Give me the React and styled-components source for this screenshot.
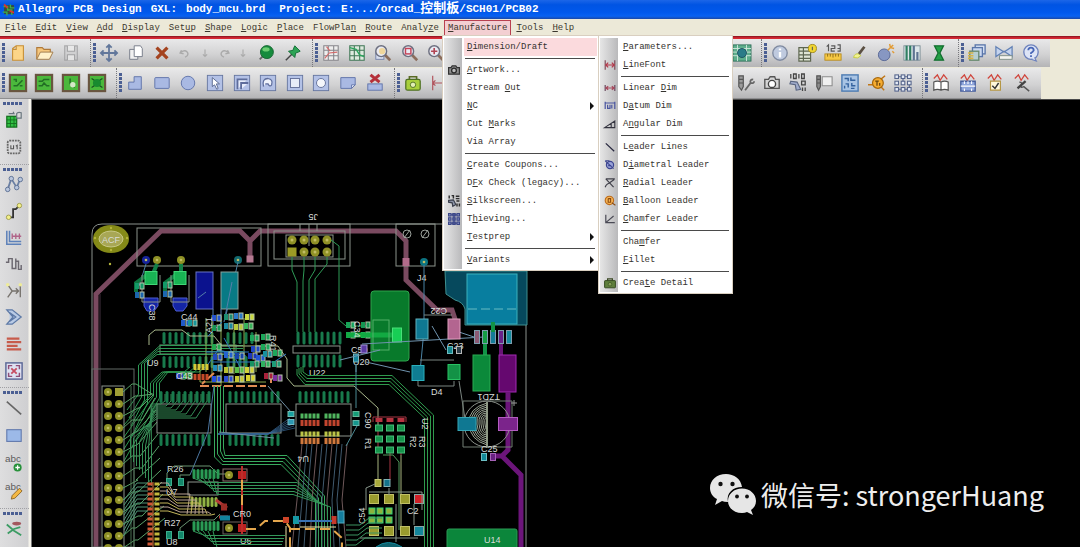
import React from "react";
import styled, { createGlobalStyle, css } from "styled-components";

const GlobalStyle = createGlobalStyle`
  * { box-sizing: border-box; }
  html, body { margin: 0; background: #000; }
  body { overflow: hidden; font-family: "Liberation Mono", "Noto Sans CJK SC", monospace; }
  button { font: inherit; color: inherit; background: none; border: 0; padding: 0; margin: 0; text-align: left; }
`;

const Window = styled.div`
  display: flex;
  flex-direction: column;
  min-height: 100vh;
  height: 100vh;
  background: #ece9d8;
`;

const TitleBar = styled.header`
  display: flex;
  align-items: center;
  height: 19px;
  padding-left: 2px;
  color: #fff;
  background: linear-gradient(#1c66e8, #0054e3 25%, #0058ec 65%, #0862f2 85%, #1a48a8);
`;

const Title = styled.h1`
  display: flex;
  gap: 8px;
  margin: 0 0 2px 2px;
  font-size: 11px;
  line-height: 14px;
  font-weight: bold;
  white-space: pre;
`;

const TitleGroup = styled.span`
  display: flex;
  gap: 9px;
  margin-left: ${(p) => (p.$far ? "6px" : "0")};
`;

const Han = styled.span`
  font-size: 13px;
`;

const MenuBar = styled.nav`
  display: flex;
  gap: 1px;
  height: 20px;
  padding: 1px 0 0 1px;
  font-size: 9px;
  line-height: 14px;
  color: #3b372e;
  border-style: solid;
  border-color: #b3182a;
  border-image: linear-gradient(#84111f 85%, #d82a33 95%) 3;
  border-width: 0 0 3px;
`;

const MenuHost = styled.div`
  position: relative;
`;

const MenuTitle = styled.button`
  height: 16px;
  padding: 0 4px;
  ${(p) =>
    p.$open &&
    css`
      background: #f3cfd2;
      outline: 1px solid #b8404f;
      outline-offset: -1px;
    `}
`;

const Mnemonic = styled.u`
  text-decoration-thickness: 1px;
  text-underline-offset: 1px;
`;

const Popup = styled.div`
  position: absolute;
  z-index: 5;
  top: ${(p) => (p.$sub ? "-1px" : "15px")};
  left: ${(p) => (p.$sub ? "155px" : "-2px")};
  width: ${(p) => (p.$sub ? "135px" : "157px")};
  padding: 2px 1px 1px;
  font-size: 9px;
  line-height: 18px;
  color: #35332f;
  background: #fff;
  border: 1px solid #d9cfc0;
`;

const PopupRow = styled.button`
  display: grid;
  grid-template-columns: 20px 1fr 10px;
  align-items: center;
  width: 100%;
  height: 18px;
  background: linear-gradient(90deg, #e6e6e6, #b9b9bb 18px, #fff 18px);
`;

const PopupLabel = styled.span`
  grid-column: 2 / span ${(p) => (p.$arrow ? 1 : 2)};
  padding-left: 3px;
  white-space: nowrap;
  background: ${(p) => (p.$active ? "#fbdadd" : "transparent")};
`;

const Glyph = styled.svg`
  display: block;
  width: ${(p) => p.$size}px;
  height: ${(p) => p.$size}px;
  margin: 0 auto;
  overflow: visible;
`;

const Rule = styled.div`
  height: 5px;
  padding: 2px 2px 2px 21px;
  background: linear-gradient(90deg, #e6e6e6, #b9b9bb 18px, #fff 18px);
  &::after {
    content: "";
    display: block;
    height: 1px;
    background: #4a4a4a;
  }
`;

const ToolRow = styled.div`
  display: flex;
  align-self: flex-start;
  height: ${(p) => (p.$tall ? "31px" : "28px")};
  margin-top: ${(p) => (p.$tall ? "1px" : "0")};
  background: linear-gradient(#e9e9ea, #d2d2d3 55%, #b4b4b6);
  border-bottom: ${(p) => (p.$tall ? "1px solid #8e8e90" : "0")};
`;

const ToolGroup = styled.div`
  display: flex;
  align-items: center;
  width: ${(p) => p.$w}px;
  padding: 0 6px 0 2px;
  border-right: 1px dotted #77777c;
  &:last-child { border-right: 0; }
`;

const Grip = styled.i`
  flex: none;
  width: ${(p) => (p.$flat ? "20px" : "3px")};
  height: ${(p) => (p.$flat ? "3px" : "20px")};
  background: repeating-linear-gradient(${(p) => (p.$flat ? "90deg" : "180deg")}, #4b5f93 0 3px, transparent 3px 4px);
`;

const ToolButton = styled.button`
  flex: ${(p) => (p.$narrow ? 19 : 26)} 1 0;
  min-width: 0;
  min-height: 0;
`;

const ToolSpace = styled.span`
  flex: 278 1 0;
`;

const Body = styled.main`
  display: flex;
  flex: 1;
  min-height: 0;
`;

const SideBar = styled.aside`
  flex: none;
  width: 32px;
  padding-right: 3px;
  overflow: hidden;
  background: linear-gradient(90deg, #dededf, #cfcfd1 28px, #f4f2ea 29px, #f4f2ea 31px, #777 31px);
`;

const SideGroup = styled.div`
  display: flex;
  flex-direction: column;
  height: ${(p) => p.$h}px;
  padding: 3px 2px 3px 3px;
  border-bottom: 1px dotted #a0a0a4;
  & > button { width: 21px; }
`;

const Canvas = styled.section`
  position: relative;
  flex: 1;
  overflow: hidden;
  background: #000;
  border-top: 1px solid #4a4a4a;
`;

const Board = styled.svg`
  display: block;
  width: 1048px;
  height: 447px;
`;

const Watermark = styled.p`
  position: absolute;
  right: 36px;
  bottom: 31px;
  display: flex;
  align-items: center;
  gap: 4px;
  margin: 0;
  color: #eee;
  font: 27px/40px "Noto Sans CJK SC", sans-serif;
  white-space: nowrap;
`;

const WechatLogo = styled.svg`
  width: 47px;
  height: 42px;
`;

/* ---------- icons, all drawn on a 20 x 20 grid ---------- */

const blue = { fill: "#a9b9e3", stroke: "#5c70a8", strokeWidth: 1 };
const line = (d, stroke = "#555b66", w = 1.3, fill = "none") => (
  <path d={d} fill={fill} stroke={stroke} strokeWidth={w} />
);
const plate = (extra, fill = "#b3c1e6") => (
  <>
    <rect x="1.5" y="1.5" width="17" height="17" fill={fill} stroke="#64759f" />
    {extra}
  </>
);
const chip = (extra) => (
  <>
    <rect x="1" y="1" width="18" height="18" fill="#4bb83c" stroke="#695540" strokeWidth="2.4" />
    {extra}
  </>
);
const lens = (extra) => (
  <>
    {line("M12 12L18 18", "#8b6d5c", 3)}
    <circle cx="8" cy="8" r="6" fill="#e9eaf2" stroke="#6d7080" strokeWidth="1.6" />
    {extra}
  </>
);
const wave = line("M2 5L6 1L9 7L13 1L17 6", "#d0453c", 1.4);

const ICONS = {
  app: (
    <>
      <rect x="3" y="3" width="14" height="13" fill="#3a4a3a" />
      {line("M2 5H8V10H14V17M1 13H7V18M12 2V7H18", "#3cb04b", 2)}
      {line("M3 2L8 7M11 11L17 14", "#d33", 2.5)}
    </>
  ),
  new: line("M4 5L8 2H16V18H4ZM4 6H8V2", "#c78f36", 1.2, "#fcd588"),
  open: (
    <>
      {line("M2 17V4H8L10 6H17V9", "#b07a3a", 1.3, "#f6c77c")}
      {line("M2 17L6 9H20L16 17Z", "#a37d50", 1.1, "#fff0c8")}
    </>
  ),
  save: (
    <g opacity=".75">
      {line("M3 2H17V18H3Z", "#9a9a9c", 1.3, "#cfcfd0")}
      {line("M6 2V8H14V2M6 18V12H14V18", "#929294", 1.2, "#ededed")}
    </g>
  ),
  move: line("M10 2V18M2 10H18M7 4L10 1L13 4M7 16L10 19L13 16M4 7L1 10L4 13M16 7L19 10L16 13", "#62779b", 2),
  copy: (
    <>
      {line("M3 6H12V17H3Z", "#7a7f8c", 1.1, "#f1f1f1")}
      {line("M8 2H15L17 5V14H8Z", "#7a7f8c", 1.1, "#fff")}
    </>
  ),
  del: line("M4 4L16 16M16 4L4 16", "#a4431f", 3.6),
  undo: line("M5 6L3 10L8 11M4 9Q11 4 14 10Q15 14 10 16", "#aaa", 2),
  down: line("M10 5V14M7 12L10 15L13 12", "#aaa", 1.6),
  redo: line("M15 6L17 10L12 11M16 9Q9 4 6 10Q5 14 10 16", "#aaa", 2),
  ball: (
    <>
      {line("M3 17L8 12", "#666", 2)}
      <circle cx="11" cy="9" r="7.2" fill="#168b3d" stroke="#156330" />
      <ellipse cx="10" cy="6" rx="4" ry="2.4" fill="#6ccc72" />
    </>
  ),
  pin: (
    <>
      {line("M2 18L9 11", "#444", 1.6)}
      {line("M12 2L18 8L16 9L13 10L12 15L5 8L10 7L11 4Z", "#126c34", 1, "#2da455")}
    </>
  ),
  gridRed: (
    <>
      {line("M2 2H18V18H2ZM7 2V18M13 2V18M2 7H18M2 13H18", "#86858a", 1.2, "#eee")}
      {line("M3 16L8 10L17 9M5 3L9 8", "#d46a6a", 1.3)}
    </>
  ),
  gridGreen: (
    <>
      {line("M2 2H18V18H2ZM7 2V18M13 2V18M2 7H18M2 13H18", "#3f7655", 1.2, "#dfeadf")}
      {line("M2 4L9 6L13 12L18 14", "#2ca35d", 1.6)}
    </>
  ),
  zoomArea: (
    <>
      <rect x="2" y="8" width="9" height="9" fill="#d7deef" stroke="#7380a8" />
      {lens(<circle cx="9" cy="8" r="3.5" fill="#f0d79c" />)}
    </>
  ),
  zoomFit: lens(<rect x="5" y="5" width="6" height="6" fill="none" stroke="#c54458" strokeWidth="1.6" />),
  zoomIn: lens(line("M8 4.5V11.5M4.5 8H11.5", "#b14554", 1.8)),
  layers: (
    <>
      <rect x="0" y="1" width="20" height="18" fill="#5fae8c" stroke="#2d6e58" />
      {line("M0 5H20M0 9H20M0 13H20M5 1V19M15 1V19", "#d0e8dc", 1)}
      <circle cx="10" cy="10" r="5" fill="#2a7b88" stroke="#18505b" />
    </>
  ),
  info: (
    <>
      <circle cx="10" cy="10" r="8" fill="#bfcadf" stroke="#7f8aa0" strokeWidth="1.5" />
      {line("M10 9V15M10 5V7", "#fff", 2.6)}
    </>
  ),
  report: (
    <>
      {line("M1 4H14V19H1ZM1 8H14M1 12H14M1 16H14M6 4V19", "#5d6650", 1.3, "#dfe5d4")}
      <circle cx="16" cy="5" r="4.5" fill="#f2d631" stroke="#9c8615" />
      {line("M16 3V7", "#665", 1.3)}
    </>
  ),
  measure: (
    <>
      {line("M3 3L5 1V8M8 2H12V5H8V8H12M15 1H18V8H15M15 5H18", "#585858", 1.3)}
      <rect x="1" y="11" width="18" height="7" fill="#f6c944" stroke="#b78a1e" />
      {line("M4 11V14M7 11V14M10 11V15M13 11V14M16 11V14", "#8a6718", 1)}
    </>
  ),
  brush: (
    <>
      {line("M4 15Q5 10 10 11L12 13Q9 17 4 15Z", "#c2c93d", 1, "#f2f291")}
      {line("M10 11L16 3", "#5a4f42", 3)}
    </>
  ),
  bomb: (
    <>
      <circle cx="8" cy="12" r="6.5" fill="#8797c2" stroke="#566594" />
      {line("M12 7L15 4M15 4L18 1M15 4L19 5M15 4L14 0M17 8L19 10", "#e29b34", 1.6)}
    </>
  ),
  bars: (
    <>
      <rect x="1" y="2" width="18" height="16" fill="#dde6ea" stroke="#7c8e96" />
      {line("M4 2V18M8 2V18", "#2f7e62", 2.4)}
      {line("M12 2V18M16 9V18", "#5e7391", 2.4)}
    </>
  ),
  hourglass: line("M5 2H15L11 10L15 18H5L9 10Z", "#126d2f", 1.4, "#25a046"),
  windows: (
    <>
      <rect x="8" y="1" width="11" height="10" fill="#dce5f5" stroke="#5a76aa" strokeWidth="1.5" />
      <rect x="5" y="4" width="11" height="10" fill="#cbd9f1" stroke="#5a76aa" strokeWidth="1.5" />
      <rect x="2" y="8" width="10" height="10" fill="#b7cfd2" stroke="#688a6e" strokeWidth="1.5" />
      {line("M0 10H6M0 13H6M0 16H6", "#d8b447", 1.8)}
    </>
  ),
  bowtie: (
    <>
      {line("M1 3L10 9L19 3V14L10 8L1 14Z", "#6281b5", 1.4, "#c5d4ee")}
      <rect x="5" y="13" width="14" height="4" fill="#f5f5f0" stroke="#7b8c84" />
    </>
  ),
  help: (
    <>
      <circle cx="10" cy="9" r="8" fill="#dde4f6" stroke="#6d82bd" strokeWidth="1.5" />
      {line("M14 15L16 19L10 17", "#6d82bd", 1.2, "#dde4f6")}
      {line("M7 7Q7 4 10 4Q13 4 13 7Q12 9 10 10V11M10 12.5V14.5", "#4967b7", 2)}
    </>
  ),
  chipA: chip(line("M5 13H9L15 7M5 6H8V9M12 13H15", "#226e25", 1.7)),
  chipB: chip(line("M4 8H8L10 6H16M4 13H8L10 10L13 13H16", "#226e25", 1.7)),
  chipC: chip(
    <>
      <path d="M9 5V11M9 11L14 15" stroke="#226e25" strokeWidth="1.7" />
      <circle cx="12" cy="12" r="3" fill="#d5e8c8" />
    </>
  ),
  chipD: chip(
    <>
      <circle cx="10" cy="10" r="4.5" fill="#188b2f" />
      {line("M4 5L7 7M16 5L13 7M4 15L7 13M16 15L13 13", "#174f20", 1.2)}
    </>
  ),
  lshape: <path d="M3 9H9V3H17V17H3Z" {...blue} />,
  rect: <rect x="2" y="4" width="16" height="12" rx="1" {...blue} />,
  circle: <circle cx="10" cy="10" r="7.5" {...blue} />,
  select: plate(line("M7 4V14L9.5 12L12 17L13.5 16L11.5 11H15Z", "#55648d", 1, "#fff")),
  step: plate(line("M5 17V6H16M9 17V10H17", "#5e6d9c", 2, "#e6ecfa")),
  arc: plate(line("M5 14Q3 5 10 5Q16 6 14 12Q12 15 10 11H7", "#5e6d9c", 1.4, "#eef2fb")),
  square: plate(<rect x="5" y="5" width="10" height="10" fill="#e7ecf8" stroke="#5f6d96" />),
  round: plate(<circle cx="10" cy="10" r="5" fill="#f4f6fb" stroke="#5f6d96" />),
  cut: (
    <>
      <path d="M2 4H18V12L14 16H2Z" {...blue} />
      <path d="M18 12L14 16V12Z" fill="#f0f2fa" stroke="#5c70a8" />
    </>
  ),
  island: (
    <>
      {line("M5 1L15 9M15 1L5 9", "#b5303a", 3.4)}
      <rect x="2" y="11" width="16" height="7" fill="#a9b9e3" stroke="#5c70a8" />
    </>
  ),
  bag: (
    <>
      {line("M6 7V3H14V7", "#5a6b24", 1.8)}
      <rect x="2" y="6" width="16" height="12" rx="2" fill="#a8cf3c" stroke="#4f7024" strokeWidth="1.4" />
      <circle cx="10" cy="12" r="3" fill="#e2efb5" stroke="#4f7024" />
    </>
  ),
  detail: (
    <>
      {line("M6 7V3H14V7", "#3c4a24", 2)}
      <rect x="1" y="6" width="18" height="12" rx="1" fill="#5f7f3c" stroke="#34491f" strokeWidth="1.6" />
      <circle cx="10" cy="12" r="3" fill="#86a158" stroke="#34491f" />
    </>
  ),
  dim: line("M3 2V18M17 2V18M3 10H17M6 7L3 10L6 13M14 7L17 10L14 13", "#b1545d", 1.3),
  font: (
    <>
      {line("M2 2V18M18 2V18", "#7a4050", 1.8)}
      {line("M3 10H17M7 6L3 10L7 14M13 6L17 10L13 14", "#b5384a", 2)}
    </>
  ),
  linear: (
    <>
      {line("M2 5V15M18 5V15", "#6b4a60", 2)}
      {line("M3 10H17M7 7L3 10L7 13M13 7L17 10L13 13", "#a8485c", 2)}
    </>
  ),
  drill: (
    <>
      {line("M2 2H7V14L5 18L2 14ZM2 6H7M2 10H7", "#555", 1.3, "#9b9b9b")}
      {line("M9 18L15 10Q14 6 18 6M15 10Q19 11 19 8", "#666", 2)}
    </>
  ),
  camera: (
    <>
      {line("M2 6H6L8 3H13L14 6H18V16H2Z", "#555", 1.5, "#d5d5d5")}
      <circle cx="10" cy="11" r="4" fill="#fff" stroke="#444" strokeWidth="1.5" />
    </>
  ),
  artwork: (
    <>
      {line("M1 6H5L7 3H13L15 6H19V17H1Z", "#333", 2, "#8d8d8d")}
      <circle cx="10" cy="11" r="4" fill="#bbb" stroke="#2c2c2c" strokeWidth="2.2" />
    </>
  ),
  silk: (
    <>
      {line("M2 1V6M6 1H9V6M13 2H19M13 6H19M14 10H19M15 14V19M19 14V19", "#2e2e2e", 2.4)}
      {line("M1 9L9 8L13 16L8 19L7 13L1 12Z", "#3a3f4c", 2, "#8d95a8")}
    </>
  ),
  thieving: (
    <g fill="#9aa3cf" stroke="#3b4788" strokeWidth="2">
      {[1, 8, 15].map((y) => [1, 8, 15].map((x) => <rect key={x + "-" + y} x={x} y={y} width="4" height="4" />))}
      <path d="M5 3H15M5 17H15M10 3V17" />
    </g>
  ),
  drillData: (
    <>
      {line("M2 0V5M5 0H8V5H5ZM11 0V5M14 0H17V5H14ZM14 8H18V12H14ZM15 15V19M18 15V19", "#444", 1.4)}
      {line("M2 8L9 9L13 17L8 18L7 12L1 11Z", "#596580", 1.2, "#9eaaca")}
    </>
  ),
  drillSheet: (
    <>
      {line("M2 2H6V14L4 18L2 14ZM2 6H6M2 10H6", "#555", 1.3, "#8d8d8d")}
      {line("M8 3H19V13H8Z", "#8c8c8c", 1.2, "#f0f0f0")}
    </>
  ),
  bga: (
    <>
      <rect x="1" y="1" width="18" height="18" fill="#a9c4e4" stroke="#4f7db3" strokeWidth="1.6" />
      {line("M4 5H8V8M11 4V7H16M5 11H8V15M12 10V13H16M11 16H15M4 16V13", "#35639f", 1.6)}
    </>
  ),
  test: (
    <>
      {line("M0 12H6M14 6L19 2M14 14L18 18", "#c17617", 1.6)}
      <circle cx="11" cy="10" r="6" fill="#f6ac30" stroke="#a7690f" strokeWidth="1.4" />
      {line("M8 8H12M10 8V13M13 10V13", "#6b470f", 1.4)}
    </>
  ),
  blocks: (
    <g fill="#e5ebf6" stroke="#56658c" strokeWidth="1.2">
      {[1, 8, 15].map((y) => [1, 8, 15].map((x) => <rect key={x + "-" + y} x={x} y={y} width="4" height="4" />))}
      <path d="M5 3H8M12 3H15M5 17H8M12 17H15M10 5V8M17 12V15" />
    </g>
  ),
  book: (
    <>
      {wave}
      {line("M2 9Q6 7 10 9Q14 7 18 9V18Q14 16 10 18Q6 16 2 18ZM10 9V18", "#555", 1.3, "#fff")}
    </>
  ),
  film: (
    <>
      {wave}
      {line("M2 8H18V19H2Z", "#475f9d", 1.5, "#8ea5db")}
      {line("M2 13.5H18M6 8V11M10 8V11M14 8V11M6 16V19M14 16V19", "#fff", 1.2)}
    </>
  ),
  check: (
    <>
      {wave}
      {line("M5 8H16V18H5Z", "#b49543", 1.3, "#fff8da")}
      {line("M7 13L10 16L14 10", "#333", 1.6)}
    </>
  ),
  probe: (
    <>
      {wave}
      {line("M7 9Q11 9 9 13Q8 16 12 14L18 19", "#555", 1.6)}
      {line("M5 16L14 8", "#444", 2.6)}
    </>
  ),
  placeChip: (
    <>
      <rect x="2" y="7" width="11" height="12" fill="#31c043" stroke="#14701f" strokeWidth="1.4" />
      {line("M2 11H13M6 7V19M10 7V19M2 15H13", "#14701f", 1)}
      {line("M4 4H10L9 2M13 4Q14 2 18 3V9H13Z", "#68757d", 1.3, "#d8d8d8")}
    </>
  ),
  part: (
    <>
      <rect x="3" y="3" width="14" height="14" rx="2" fill="none" stroke="#666" strokeWidth="2" strokeDasharray="2 1" />
      {line("M6.5 8V12H9.500V8M12 9L13.500 8V12.500", "#555", 1.2)}
    </>
  ),
  route: (
    <>
      {line("M3 16L7 4L13 14L17 4", "#6a7fa3", 2)}
      <g fill="#b9c6dd" stroke="#596d91">
        <circle cx="3" cy="16" r="2.5" /><circle cx="7" cy="4" r="2.5" />
        <circle cx="13" cy="14" r="2.5" /><circle cx="17" cy="5" r="2.5" />
      </g>
    </>
  ),
  slide: (
    <>
      {line("M4 17H9V8H12L16 4", "#333", 2)}
      <g fill="#f2ef8a" stroke="#9d9a4b"><circle cx="4" cy="17" r="2.5" /><circle cx="16" cy="4" r="2.5" /></g>
    </>
  ),
  bus: (
    <>
      {line("M2 2V17H18M5 2V14H18", "#5e82ba", 1.7)}
      {line("M8 5V11M12 5V11M16 5V11M8 8H18", "#b06488", 1.5)}
    </>
  ),
  delay: line("M1 8H4V4H8V15H12V4M12 7H15V16H18V11", "#6c6870", 1.6),
  vertex: (
    <>
      {line("M3 3L8 10L3 17M8 10H14M12 7L15 10L12 13M17 3V17", "#77736d", 1.5)}
      <g fill="#efec99"><circle cx="3" cy="3" r="2" /><circle cx="17" cy="3" r="2" /></g>
    </>
  ),
  chevrons: line("M2 2H8L18 10L8 18H2L9 10ZM5 5L12 10L5 15", "#5d79a6", 1.4, "#b9cbe6"),
  lines: line("M2 4H16M2 8H18M2 12H14M2 16H18", "#c75b4b", 2.6),
  fan: (
    <>
      <rect x="1" y="1" width="18" height="18" fill="#dfe2f2" stroke="#596695" strokeWidth="1.6" />
      {line("M7 7L13 13M13 7L7 13", "#c74d62", 2)}
      {line("M4 8V4H8M12 4H16V8M16 12V16H12M8 16H4V12", "#8f4f78", 1.6)}
    </>
  ),
  diag: line("M2 3L18 17", "#666", 1.8),
  panel: <rect x="2" y="3" width="16" height="13" fill="#9cb9e8" stroke="#6078ac" strokeWidth="1.2" />,
  textAdd: (
    <>
      <text x="0" y="9" fontSize="11" fontFamily="Liberation Sans, sans-serif" fill="#5a5a5a">abc</text>
      <circle cx="14" cy="15" r="4.5" fill="#27913a" />
      {line("M14 12.5V17.5M11.5 15H16.5", "#fff", 1.4)}
    </>
  ),
  textEdit: (
    <>
      <text x="0" y="9" fontSize="11" fontFamily="Liberation Sans, sans-serif" fill="#5a5a5a">abc</text>
      {line("M7 19L8 15L16 7L19 10L11 18Z", "#8a6428", 1, "#f4b844")}
    </>
  ),
  net: (
    <>
      {line("M2 5L10 12L18 17M3 15L10 10L17 8", "#3c9c64", 2)}
      <ellipse cx="13" cy="4" rx="5" ry="2" fill="#a3575d" />
    </>
  ),
  datum: line("M2 3V15M18 3V15M2 5H18M6 8V14H10V8M13 8V14", "#4a56a0", 2),
  angular: line("M1 16H18V5Z M12 9V16", "#33333f", 1.8),
  leader: line("M3 4L17 17", "#24243c", 2),
  diametral: (
    <>
      <circle cx="10" cy="10" r="6" fill="#9aa3d8" stroke="#3c4590" strokeWidth="2" />
      {line("M2 3L16 16M2 3H9M7 11H12", "#3c4590", 1.8)}
    </>
  ),
  radial: line("M3 3H18M3 3L16 17M10 10Q4 11 2 17M10 9L17 4", "#40404a", 2),
  balloon: (
    <>
      <circle cx="9" cy="9" r="7" fill="#f5b456" stroke="#bd6a18" strokeWidth="1.8" />
      {line("M7 6H11V12H7V6M13 13L19 17", "#8a4a10", 1.8)}
    </>
  ),
  corner: line("M3 3V16H18M3 16L16 5", "#4a4a55", 2),
};

const Icon = ({ name, size = 18 }) => (
  <Glyph viewBox="0 0 20 20" $size={size} aria-hidden="true">
    {ICONS[name]}
  </Glyph>
);

/* "&" marks the access key of a label */
const Label = ({ text }) => {
  const at = text.indexOf("&");
  if (at < 0) return text;
  return (
    <>
      {text.slice(0, at)}
      <Mnemonic>{text[at + 1]}</Mnemonic>
      {text.slice(at + 2)}
    </>
  );
};

const MENUS = ["&File", "&Edit", "&View", "&Add", "&Display", "Set&up", "&Shape", "&Logic", "&Place", "FlowPla&n", "&Route", "Analy&ze", "&Manufacture", "&Tools", "&Help"];

const MANUFACTURE = [
  { text: "&Dimension/Draft", active: true }, null,
  { text: "&Artwork...", icon: "artwork" },
  { text: "Stream &Out" },
  { text: "&NC", arrow: true },
  { text: "Cut &Marks" },
  { text: "Via Array" }, null,
  { text: "&Create Coupons..." },
  { text: "D&Fx Check (legacy)..." },
  { text: "&Silkscreen...", icon: "silk" },
  { text: "T&hieving...", icon: "thieving" },
  { text: "&Testprep", arrow: true }, null,
  { text: "&Variants", arrow: true },
];

const DIMENSION = [
  { text: "&Parameters..." },
  { text: "&LineFont", icon: "font" }, null,
  { text: "Linear &Dim", icon: "linear" },
  { text: "D&atum Dim", icon: "datum" },
  { text: "A&ngular Dim", icon: "angular" }, null,
  { text: "L&eader Lines", icon: "leader" },
  { text: "D&iametral Leader", icon: "diametral" },
  { text: "&Radial Leader", icon: "radial" },
  { text: "&Balloon Leader", icon: "balloon" },
  { text: "&Chamfer Leader", icon: "corner" }, null,
  { text: "Cha&mfer" },
  { text: "&Fillet" }, null,
  { text: "Crea&te Detail", icon: "detail" },
];

const Menu = ({ items, sub, children }) => (
  <Popup $sub={sub} role="menu">
    {items.map((item, i) =>
      item ? (
        <PopupRow key={i} role="menuitem">
          <span>{item.icon && <Icon name={item.icon} size={12} />}</span>
          <PopupLabel $active={item.active} $arrow={item.arrow}>
            <Label text={item.text} />
          </PopupLabel>
          {item.arrow && (
            <Glyph viewBox="0 0 8 8" $size={8}><path d="M2 0L6 4L2 8Z" fill="#111" /></Glyph>
          )}
        </PopupRow>
      ) : (
        <Rule key={i} />
      )
    )}
    {children}
  </Popup>
);

const ROW_ONE = [
  { w: 91, tools: ["new", "open", "save"] },
  { w: 222, tools: ["move", "copy", "del", "-undo", "-down", "-redo", "-down", "ball", "pin"] },
  { w: 449, tools: ["gridRed", "gridGreen", "zoomArea", "zoomFit", "zoomIn", null, "layers"] },
  { w: 197, tools: ["info", "report", "measure", "brush", "bomb", "bars", "hourglass"] },
  { w: 91, tools: ["windows", "bowtie", "help"] },
];
const ROW_TWO = [
  { w: 117, tools: ["chipA", "chipB", "chipC", "chipD"] },
  { w: 278, tools: ["lshape", "rect", "circle", "select", "step", "arc", "square", "round", "cut", "island"] },
  { w: 528, tools: ["bag", "dim", null, "drill", "camera", "drillData", "drillSheet", "bga", "test", "blocks"] },
  { w: 118, tools: ["book", "film", "check", "probe"] },
];
const SIDE = [
  { h: 66, tools: ["placeChip", "part"] },
  { h: 223, tools: ["route", "slide", "bus", "delay", "vertex", "chevrons", "lines", "fan"] },
  { h: 121, tools: ["diag", "panel", "textAdd", "textEdit"] },
  { h: 66, tools: ["net", "vertex"] },
];

const Tool = ({ name }) => {
  if (!name) return <ToolSpace />;
  const narrow = name[0] === "-";
  const icon = narrow ? name.slice(1) : name;
  return (
    <ToolButton $narrow={narrow} aria-label={icon}>
      <Icon name={icon} size={narrow ? 14 : 18} />
    </ToolButton>
  );
};

const ToolBar = ({ groups, tall }) => (
  <ToolRow $tall={tall}>
    {groups.map((g, i) => (
      <ToolGroup key={i} $w={g.w}>
        <Grip />
        {g.tools.map((t, j) => <Tool key={j} name={t} />)}
      </ToolGroup>
    ))}
  </ToolRow>
);

/* ---------- circuit board ---------- */

const range = (n) => Array.from({ length: n }, (_, i) => i);

const Path = ({ d, c = "#2f9b57", w = 1, o = 1, f = "none", dash }) => (
  <path d={d} stroke={c} strokeWidth={w} opacity={o} fill={f} strokeDasharray={dash} />
);
const Pad = ({ x, y, w = 6, h = 6, c = "#19a04e", s = "none" }) => (
  <rect x={x - w / 2} y={y - h / 2} width={w} height={h} fill={c} stroke={s} strokeWidth="1" />
);
const Box = ({ x, y, x2, y2, c = "#8c948c", f = "none", r = 0 }) => (
  <rect x={x} y={y} width={x2 - x} height={y2 - y} stroke={c} fill={f} rx={r} />
);
const Via = ({ x, y, r = 4.5, c = "#8f9126" }) => (
  <>
    <circle cx={x} cy={y} r={r} fill={c} />
    <circle cx={x} cy={y} r={r / 3} fill="#c1bd64" />
  </>
);
const Pins = ({ x, y, n, step = 6, h = 12, w = 3, c = "#187a4c" }) =>
  range(n).map((i) => <rect key={i} x={x + i * step - w / 2} y={y - h / 2} width={w} height={h} rx="1.5" fill={c} />);
const Ref = ({ x, y, t, a = 0, s = 9 }) => (
  <text x={x} y={y} fontSize={s} fill="#d8dcd8" fontFamily="Liberation Sans, sans-serif" transform={`rotate(${a} ${x} ${y})`}>
    {t}
  </text>
);

const SMALL_PARTS = [
  [139, 286, "#139a68"], [139, 295, "#1c66ad"], [167, 285, "#139a68"], [167, 294, "#1c66ad"],
  [185, 323, "#2059c8"], [192, 323, "#16949a"], [216, 318, "#2456d0"], [228, 317, "#1b8c70"], [238, 316, "#2b77c6"],
  [249, 317, "#c8d840"], [216, 328, "#189658"], [228, 326, "#1d88a0"], [238, 327, "#b9ca3c"], [248, 326, "#38b25a"],
  [254, 338, "#1da65a"], [265, 337, "#1da65a"], [265, 347, "#1ca75a"], [255, 349, "#2147c4"], [277, 353, "#1da65a"],
  [216, 347, "#23a750"], [217, 357, "#2048bc"], [228, 355, "#2462cf"], [239, 356, "#1644ab"], [252, 356, "#1c35b8"],
  [260, 358, "#2355d0"], [267, 354, "#1790a0"], [254, 364, "#179262"], [265, 364, "#30b060"], [276, 364, "#1e9c78"],
  [180, 376, "#2340bd"], [187, 376, "#249c40"], [217, 368, "#218cba"], [228, 370, "#b9bf31"], [239, 370, "#59bd48"],
  [249, 370, "#d1d23b"], [216, 379, "#264fe0"], [228, 379, "#2c4bd0"], [239, 379, "#c7c935"], [250, 378, "#d9d32d"],
  [268, 376, "#a8213a"], [277, 378, "#7a2f9e"], [350, 325, "#18a558"], [365, 325, "#159552"], [350, 335, "#18a558"], [365, 335, "#1cc060"],
];

const CircuitBoard = () => (
  <Board viewBox="32 100 1048 447" role="img" aria-label="body_mcu.brd board layout">
    <Path d="M92 547V234Q92 224 102 224H526V547" c="#8b928d" />
    <Path d="M96 547V294L161 231H240L250 241L260 231H396L406 241V280L437 310H452L456 322M250 241V260" c="#7a4a60" w={5} />
    <Path d="M100 547V294" c="#43303f" w={1} />

    <ellipse cx="111" cy="239" rx="18" ry="14" fill="#858a18" />
    <ellipse cx="111" cy="239" rx="12" ry="8" fill="#a8a755" stroke="#c9c987" />
    <Ref x={102} y={243} t="ACF" />
    {[[95, 238], [127, 238], [111, 228], [111, 250], [110, 264]].map(([x, y]) => <circle key={x + "-" + y} cx={x} cy={y} r="1.2" fill="#b5b53c" />)}

    <Box x={137} y={228} x2={261} y2={266} />
    <Box x={268} y={224} x2={350} y2={266} />
    <Box x={274} y={231} x2={345} y2={259} />
    <Box x={286} y={235} x2={333} y2={257} />
    <Box x={396} y={224} x2={435} y2={266} />
    <Path d="M300 224V231M309 224V246M317 224V231" c="#8c948c" />
    {[292, 304, 315, 327].map((x, i) => (
      <g key={x}>
        <Via x={x} y={240} />
        {i ? <Via x={x} y={252} /> : <Pad x={x} y={252} w={9} h={9} c="#9b9b25" />}
        <Path d={`M${x} 257V${270 - (i === 3 ? 6 : 0)}L${297 + i * 6} ${282 - i}V332`} />
      </g>
    ))}
    <Path d="M331 240L339 246V320L346 326H369" />
    {[407, 425].map((x) => (
      <g key={x}>
        <circle cx={x} cy="234" r="4" fill="none" stroke="#9aa09a" />
        <Path d={`M${x - 3} 238L${x + 3} 230`} c="#9aa09a" />
      </g>
    ))}
    <Ref x={318} y={214} t="J5" a={180} />
    <Ref x={417} y={281} t="J4" s={9} />

    <Via x={146} y={260} r={4} c="#16249b" />
    <Via x={157} y={260} r={4} />
    <Via x={181} y={260} r={4} />
    <Via x={238} y={260} r={4} c="#12686e" />
    <Pad x={250} y={259} w={7} h={7} c="#b57991" />
    <Via x={424} y={262} r={4} c="#0c7381" />
    <Pad x={406} y={262} w={7} h={8} c="#b36b8b" />
    <Path d="M157 264L152 276M181 264V276" c="#128047" w={4} />
    <Path d="M146 264L139 286M238 262L226 315M424 265V330L420 372" c="#4b83a4" />
    {[151, 180].map((x) => (
      <g key={x}>
        <Path d={`M${x - 3} 274L${x - 15} 283V292`} c="#0d743e" w={4} />
        <Pad x={x} y={278} w={12} h={13} c="#19b354" s="#43d778" />
        <Path d={`M${x - 7} 298H${x + 7}V306L${x + 3} 311H${x - 4}L${x - 7} 306Z`} c="#4e5fd0" f="#1425a5" />
        <Path d={`M${x + 9} 275V302H${x - 9}V275`} c="#889188" />
      </g>
    ))}
    <Ref x={149} y={304} t="C38" a={90} s={9} />
    <Ref x={196} y={272} x2={213} t="" />
    <Box x={196} y={272} x2={213} y2={309} c="#6974c3" f="#0b128e" />
    <Box x={221} y={272} x2={238} y2={309} c="#88a29c" f="#087a85" />
    <Path d="M198 298L206 292M232 282L224 322M213 309V325M221 309V325" c="#557fa9" />

    <Pins x={164} y={338} n={9} />
    <Pins x={164} y={362} n={9} />
    <Pins x={228} y={338} n={5} />
    <Pins x={228} y={362} n={4} />
    <Box x={160} y={345} x2={236} y2={354} c="#6f9a77" />
    {range(4).map((i) => (
      <Path key={i} d={`M243 ${345.5 + i * 3}H${160 - i}L${138.5 + i * 3} ${365 - i}V${394 + i * 3}L${127 + i * 2} ${410 + i * 8}`} />
    ))}
    {range(4).map((i) => (
      <Path key={"q" + i} d={`M${205 - i * 5} 367L${199 - i * 5} 372H${162 + i * 2}L${150.5 + i * 3} 383V${395 + i}L124 ${425 + i * 12}`} c="#2c9951" />
    ))}
    <Path d="M149 345V335L155 330H182L190 336H214L222 346H278L287 359V378L294 386H354L378 408V425" c="#a9b88c" />
    <Path d="M200 370V382H266M206 318V372M212 315V382M221 316V386M234 330V374M244 318V376M256 332V372" c="#86a74e" />
    <Path d="M206 352H249M208 336L222 322M204 370L218 350L246 356M224 338L244 374M212 362H274L286 354" c="#2d76c2" />
    <Path d="M200 386H266M271 374V384M214 373L202 384" c="#e08c54" w={2} dash="9 3" />
    {SMALL_PARTS.map(([x, y, c]) => (
      <g key={x + "-" + y}>
        <Pad x={x - 2} y={y} w={4} h={6} c={c} />
        <Pad x={x + 3} y={y} w={4} h={6} c={c} s="#b4c6a8" />
      </g>
    ))}
    {range(4).map((i) => (
      <g key={i}>
        <Pad x={195 + i * 4} y={367} w={3} h={6} c="#d6c737" />
        <Pad x={195 + i * 4} y={377} w={3} h={6} c="#c64a28" />
      </g>
    ))}
    <Ref x={181} y={320} t="C44" />
    <Ref x={147} y={366} t="U9" />
    <Ref x={176} y={379} t="C43" />
    <Ref x={212} y={333} t="A21" a={-90} />
    <Ref x={270} y={335} t="R41" a={90} />

    <Pins x={298} y={338} n={8} h={13} />
    <Pins x={298} y={361} n={8} h={13} />
    <Box x={293} y={346} x2={340} y2={353} />
    <Ref x={309} y={376} t="U22" s={9} />
    <Box x={371} y={291} x2={409} y2={361} c="#2fa44d" f="#087a2b" r={3} />
    <Path d="M346 335H392" c="#12aa42" w={5} />
    <Box x={373} y={320} x2={389} y2={350} c="#52af68" />
    <Pad x={397} y={335} w={9} h={14} c="#18ce55" s="#48e078" />
    <Ref x={354} y={321} t="C34" a={90} />
    <Ref x={351} y={353} t="C50" />
    <Ref x={353} y={365} t="U20" />
    <Pad x={356} y={358} w={5} h={8} c="#16829b" s="#7fb4bd" />
    <Pad x={364} y={349} w={6} h={8} c="#5b3aa3" s="#a592d7" />
    <Path d="M340 360L380 350M362 344L484 337M366 362L410 372M356 364V372M432 326L446 350M459 332L477 338" c="#6f93ae" />

    <Path d="M445 271H527V325H465V309Q463 302 455 300L446 294Z" c="#3f9090" f="#06495d" />
    <Box x={467} y={274} x2={517} y2={324} c="#3ab2bd" f="#087e9f" />
    <Path d="M468 309H516" c="#67bbc2" dash="9 4" />
    <Pad x={422} y={329} w={12} h={20} c="#0f7892" s="#61b1bd" />
    <Pad x={454} y={329} w={12} h={20} c="#b36590" s="#dc9fbc" />
    <Pad x={418} y={373} w={12} h={15} c="#0f7d92" s="#2bb1bd" />
    <Pad x={454} y={372} w={12} h={15} c="#139246" s="#29c263" />
    <Path d="M424 315H452" c="#7b8580" />
    <Ref x={447} y={308} t="C22" a={180} />
    <Ref x={447} y={349} t="C23" />
    <Pad x={450} y={350} w={5} h={7} c="#13858d" s="#6ebabd" />
    <Pad x={459} y={350} w={5} h={7} c="#2b3e48" s="#b7b7b7" />
    {[[477, "#8c5a74"], [485, "#159e45"], [493, "#147c98"], [501, "#68228a"], [509, "#158b9d"]].map(([x, c]) => (
      <Pad key={x} x={x} y={337} w={5} h={13} c={c} s="#7e9cae" />
    ))}
    <Path d="M493 322V332M485 344V356" c="#119346" w={4} />
    <Path d="M501 344V356" c="#681575" w={4} />
    <Box x={473} y={355} x2={490} y2={391} c="#2aac53" f="#0b893a" />
    <Box x={499} y={355} x2={516} y2={392} c="#a32ab4" f="#65086f" />
    <Path d="M418 381V386H454V381M459 381L466 425M454 360H420" c="#7b8580" />
    <Ref x={431} y={395} t="D4" />
    <Ref x={500} y={394} t="TZD1" a={180} />
    <Path d="M508 392V450L502 456L521 475V547M495 456H505" c="#6c157a" w={5} />
    <Path d="M463 401H512V447H463Z" c="#737f74" />
    <circle cx="487" cy="424" r="23" fill="none" stroke="#8b918a" />
    {range(9).map((i) => <Path key={i} d={`M487 ${403 + i * 2}Q${468 + i * 2} ${408 + i} ${469 + i * 2} 424Q${470 + i * 2} ${440 - i} 487 ${445 - i * 2}`} c="#9aa494" />)}
    <Path d="M487 402V447" c="#8f9a86" w={2} />
    <Pad x={467} y={424} w={18} h={13} c="#0f7892" s="#35a5b5" />
    <Pad x={508} y={424} w={19} h={13} c="#7b248b" s="#b45dc1" />
    <Path d="M511 403H517M514 400V406" c="#999" />
    <Ref x={481} y={452} t="C25" s={9} />
    <Pad x={484} y={457} w={5} h={7} c="#138a99" s="#6ebfc4" />
    <Pad x={493} y={457} w={5} h={7} c="#692082" s="#a663b7" />
    <Box x={447} y={529} x2={517} y2={550} c="#2b9a54" f="#0b863b" r={2} />
    <Ref x={484} y={543} t="U14" />

    {range(4).map((i) => (
      <Path key={i} d={`M${303 - i * 2} ${366 + i}V${372 + i}L${308 - i} ${375.5 + i * 3}H${392 - i}L${433.5 - i * 3} ${415 + i}V547`} c="#2f9a4d" w={1} />
    ))}
    <Box x={92} y={369} x2={134} y2={547} c="#636b66" />
    <Box x={102} y={386} x2={124} y2={550} />
    {range(14).map((i) => {
      const y = 392 + i * 12;
      return (
        <g key={i}>
          <Via x={108} y={y} r={4} />
          {i ? <Via x={119} y={y} r={4} /> : <Pad x={119} y={y} w={8} h={8} c="#a09e35" />}
          <Path d={`M123 ${y}L${132 + (i % 3) * 3} ${y - 8}H${136 + (i % 4) * 2}L${152 + i} ${Math.max(394, y - 30)}`} c="#59a269" />
        </g>
      );
    })}
    <Path d="M131 386V547M134 470V547" c="#486e50" />

    <Box x={157} y={404} x2={211} y2={433} />
    <Box x={226} y={404} x2={281} y2={433} />
    <Pins x={161} y={397} n={9} />
    <Pins x={161} y={440} n={9} />
    <Pins x={230} y={397} n={9} />
    <Pins x={230} y={440} n={9} />
    {range(8).map((i) => (
      <Path key={i} d={`M${207 - i * 6} 394V401L${196 - i * 5} ${418 - i * 2}H${158 - i}L${130.5 + i * 3} ${436 + i * 2}V${458 + i * 4}`} c="#358f57" />
    ))}
    {range(4).map((i) => (
      <Path key={i} d={`M${214.5 + i * 3} 386V${457 - i * 3}L${222 + i} ${464.5 - i * 3}H${281 + i * 2}L${315.5 + i * 3} ${499 - i}V547`} c="#38aa5e" />
    ))}
    <Path d="M214 386L208 432L190 475" c="#4c76a0" />
    {range(6).map((i) => <Path key={i} d={`M218 434H268L${290 + i} ${418 + i * 2}`} c="#386897" o={0.7} />)}
    <Path d="M268 386L291 412M219 432L274 438" c="#708fa4" />

    <Box x={296} y={404} x2={351} y2={436} />
    <Pins x={300} y={397} n={9} />
    {[416, 434].map((y, row) =>
      range(9).map((i) => (
        <g key={y + "-" + i}>
          <Pad x={302 + i * 4 + (i > 4 ? 4 : 0)} y={y} w={3} h={5} c={row ? "#bbc548" : "#50b65f"} />
          <Pad x={302 + i * 4 + (i > 4 ? 4 : 0)} y={y + 7} w={3} h={6} c={row ? "#d0793d" : "#c2452f"} />
        </g>
      ))
    )}
    {range(10).map((i) => (
      <Path key={i} d={`M${302 + i * 5} 444L${297 + i * 5} 500L${292 + i * 6} 547`} c={i % 3 ? "#50708a" : "#8a6e70"} o={0.8} />
    ))}
    <Pad x={291} y={414} w={6} h={5} c="#18a1a0" s="#76bcae" />
    <Pad x={291} y={422} w={6} h={5} c="#2c99b3" s="#76bcc6" />
    <Pad x={356} y={414} w={6} h={5} c="#159d78" s="#68b79a" />
    <Pad x={356} y={423} w={6} h={5} c="#15968d" s="#68b7a9" />
    <Path d="M356 364V408M357 426L346 446" c="#4b8a93" />
    <Ref x={309} y={456} t="U4" a={180} s={9} />
    <Ref x={365} y={412} t="C90" a={90} />
    <Ref x={365} y={438} t="R1" a={90} />
    <Ref x={422} y={418} t="U2" a={90} />
    <Ref x={419} y={436} t="R3" a={90} />
    <Ref x={410} y={436} t="R2" a={90} />
    <Path d="M373 422V417H406V422M378 425V480M390 447V480M401 447V530" c="#a93645" w={1} />
    {[428, 439, 450].map((y) => [379, 390, 401].map((x) => <Pad key={x + "-" + y} x={x} y={y} w={7} h={6} c="#17934c" s="#45bd78" />))}
    {[379, 390, 401].map((x) => <Pad key={x} x={x} y={420} w={7} h={4} c="#b73441" />)}
    <Path d="M378 455V483M383 455H393L399 462V530M401 455V530" c="#52995c" />
    <Pad x={378} y={483} w={6} h={7} c="#a8a93c" s="#c9c974" />
    <Pad x={387} y={483} w={6} h={7} c="#14738b" s="#81b1b6" />
    {[499, 531].map((y) => (
      <g key={y}>
        {[374, 389, 405].map((x) => <Pad key={x} x={x} y={y} w={9} h={9} c="#9a9b2e" s="#c1c066" />)}
        <Pad x={419} y={y} w={9} h={9} c={y === 499 ? "#d12027" : "#14869c"} s="#8aa6a3" />
      </g>
    ))}
    {[511, 520].map((y) => [372, 380, 389].map((x) => <Pad key={x + "-" + y} x={x} y={y} w={6} h={6} c="#8cb23c" s="#36d176" />))}
    <Path d="M366 510V488L375 484M396 504V542M414 504V525M369 492H422V510M389 488V495M360 538H418" c="#86958a" />
    <Ref x={365} y={524} t="C54" a={-90} />
    <Ref x={407} y={514} t="C2" />
    <Path d="M376 547Q388 538 402 547" c="#15899c" f="#0f626e" />

    <Ref x={167} y={472} t="R26" />
    <Ref x={166} y={495} t="U7" />
    <Ref x={164} y={526} t="R27" />
    <Ref x={166} y={545} t="U8" />
    <Ref x={240} y={544} t="U6" />
    <Path d="M167 478V473L174 466H210L218 474H226M180 478V475H190M180 538V528L190 520H214L220 514" c="#6a9471" />
    {[[169, 482], [181, 482], [169, 535], [181, 535]].map(([x, y]) => <Pad key={x + "-" + y} x={x} y={y} w={5} h={7} c="#13876b" s="#3cad8c" />)}
    <Pins x={194} y={474} n={7} step={4} h={10} c="#2a9b55" />
    <Pins x={192} y={502} n={7} step={4} h={10} c="#91b444" />
    <Pins x={194} y={526} n={7} step={4} h={10} c="#2a9b55" />
    <Box x={188} y={482} x2={218} y2={495} />
    {range(5).map((i) => (
      <g key={i}>
        <Path d={`M${193 + i * 5} 478L${205 + i * 3} ${482.5 + i * 3}H${297 - i}L${318.5 + i * 3} ${503 + i}V547`} c="#34985a" />
        <Path d={`M${193 + i * 5} 531L${205 + i * 3} ${535.5 + i * 3}H${285 - i}`} c="#34985a" />
      </g>
    ))}
    {range(8).map((i) => (
      <g key={i}>
        <Path d={`M124 ${500 + i * 5}L137 ${483 + i * 4}H148`} c="#4f9576" />
        <Path d={`M160 ${483 + i * 4}H168L${174 + i} ${494 + i * 3}H${190 + i * 3}L${187 + i * 4} 514`} c={i % 2 ? "#c4b75a" : "#baa395"} />
      </g>
    ))}
    {range(14).map((i) => (
      <g key={i}>
        <Pad x={150} y={484 + i * 5} w={5} h={3} c="#cf5836" />
        <Pad x={157} y={484 + i * 5} w={5} h={3} c="#c4b83d" />
      </g>
    ))}
    <Path d="M153 482V547" c="#d8793f" />
    <Box x={223} y={469} x2={247} y2={481} c="#8e7370" />
    <Via x={229} y={475} r={4} />
    <Pad x={242} y={475} w={8} h={8} c="#bb2020" />
    <Box x={223} y={522} x2={247} y2={534} c="#6e6461" />
    <Via x={229} y={528} r={4} />
    <Pad x={242} y={528} w={8} h={8} c="#bb2020" />
    <Path d="M242 466V534" c="#bc2e2b" w={2} />
    <Path d="M242 480V508M246 529H256L265 521H285L290 528V547M290 529H332L342 538V547" c="#e4a64d" w={2} dash="10 5" />
    <Ref x={233} y={517} t="CR0" />
    <Path d="M216 500L227 508M219 517H228" c="#b53a38" w={3} />
    <Pad x={224} y={507} w={6} h={7} c="#9c2d26" />
    <Pad x={225} y={518} w={10} h={5} c="#11849c" />
    <Pad x={286} y={520} w={6} h={6} c="#cd4428" />
    <Pad x={296} y={520} w={6} h={8} c="#1697a3" />
    <Pad x={334} y={520} w={5} h={8} c="#c63a2c" />
    <Pad x={341} y={517} w={6} h={12} c="#157e9e" s="#55aabe" />
    <Path d="M298 521H332" c="#3872b4" w={2} />
    <Path d="M286 526V547M300 527H336" c="#efe2a6" />
    {range(5).map((i) => <Path key={i} d={`M346 ${525 + i * 5}H${360 - i}L${369 - i} ${518 + i * 5}H382`} c="#3c9462" />)}
  </Board>
);

export default function App() {
  return (
    <Window>
      <GlobalStyle />
      <TitleBar>
        <span><Icon name="app" size={14} /></span>
        <Title>
          <TitleGroup>
            <span>Allegro</span><span>PCB</span><span>Design</span><span>GXL:</span><span>body_mcu.brd</span>
          </TitleGroup>
          <TitleGroup $far>
            <span>Project:</span><span>E:.../orcad_<Han>控制板</Han>/SCH01/PCB02</span>
          </TitleGroup>
        </Title>
      </TitleBar>
      <MenuBar>
        {MENUS.map((m) => {
          const open = m === "&Manufacture";
          return (
            <MenuHost key={m}>
              <MenuTitle $open={open} aria-expanded={open}><Label text={m} /></MenuTitle>
              {open && (
                <Menu items={MANUFACTURE}>
                  <Menu items={DIMENSION} sub />
                </Menu>
              )}
            </MenuHost>
          );
        })}
      </MenuBar>
      <ToolBar groups={ROW_ONE} />
      <ToolBar groups={ROW_TWO} tall />
      <Body>
        <SideBar>
          {SIDE.map((g, i) => (
            <SideGroup key={i} $h={g.h}>
              <Grip $flat />
              {g.tools.map((t, j) => <Tool key={j} name={t} />)}
            </SideGroup>
          ))}
        </SideBar>
        <Canvas>
          <CircuitBoard />
          <Watermark>
            <WechatLogo viewBox="0 0 47 42" aria-hidden="true">
              <path d="M16 0C7 0 0 6 0 14C0 19 3 23 7 25L5 31L12 27Q14 28 18 28C16 19 23 13 32 13C31 5 24 0 16 0Z" fill="#e6e6e6" />
              <path d="M32 14.5C24 14.5 18 20 18 27C18 34 24 39 32 39Q35 39 37 38L43 41L41 36C44 34 46 31 46 27C46 20 40 14.5 32 14.5Z" fill="#e6e6e6" />
              <g fill="#111">
                <circle cx="10.5" cy="10" r="2.2" /><circle cx="22.5" cy="10" r="2.2" />
                <circle cx="27" cy="22.5" r="1.9" /><circle cx="37" cy="22.5" r="1.9" />
              </g>
            </WechatLogo>
            <span>微信号: strongerHuang</span>
          </Watermark>
        </Canvas>
      </Body>
    </Window>
  );
}
